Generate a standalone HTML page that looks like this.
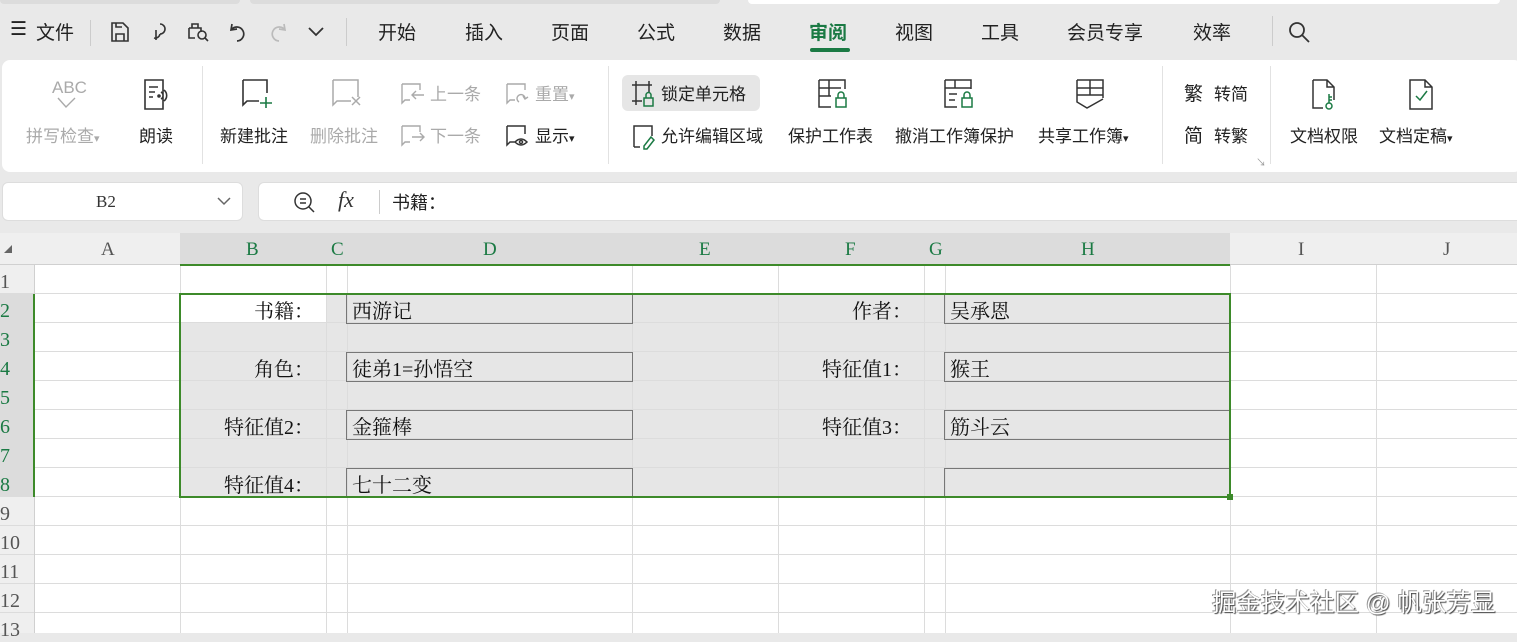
<!DOCTYPE html>
<html><head><meta charset="utf-8"><style>
*{margin:0;padding:0;box-sizing:border-box}
body{width:1517px;height:633px;overflow:hidden;background:#e9e9e9;font-family:"Liberation Sans","Noto Sans CJK SC",sans-serif;position:relative;color:#222}
.a{position:absolute;white-space:nowrap}
.m{font-size:19px;top:18px;color:#222}
.r{font-size:17px;color:#222;margin-top:-3px}
.g{color:#aaa}
.cell{font-family:"Liberation Serif","Noto Serif CJK SC",serif;font-size:20px;color:#111;margin-top:-2px}
.hd{font-family:"Liberation Serif","Noto Serif CJK SC",serif;font-size:19px;top:239px;color:#555}
.rn{font-family:"Liberation Serif","Noto Serif CJK SC",serif;font-size:20px;left:0;width:20px;text-align:left;color:#555;margin-top:1px}
.vl{position:absolute;width:1px;background:#dcdcdc;top:265px;height:368px}
.bx{position:absolute;border:1px solid #777;height:30px}
svg{position:absolute}
</style></head><body>
<div class="a" style="left:0;top:0;width:240px;height:4px;background:#dcdcdc;border-radius:0 0 6px 6px"></div>
<div class="a" style="left:250px;top:0;width:470px;height:4px;background:#dcdcdc;border-radius:0 0 6px 6px"></div>
<div class="a" style="left:748px;top:0;width:752px;height:4px;background:#fff;border-radius:0 0 6px 6px"></div>

<div class="a m" style="left:10px;">☰</div>
<div class="a m" style="left:36px;">文件</div>
<div class="a" style="left:90px;top:20px;width:1px;height:26px;background:#ccc"></div>
<svg style="left:108px;top:20px" width="24" height="24" fill="none" stroke="#333" stroke-width="1.6"><path d="M4 3h11l5 5v13H4z M8 21v-7h8v7 M8 3v4h6"/></svg>
<svg style="left:148px;top:20px" width="24" height="24" fill="none" stroke="#333" stroke-width="1.6"><path d="M12 4a5 5 0 0 1 0 10 M12 14a5 5 0 0 1-6 4 M8 10v10"/></svg>
<svg style="left:186px;top:20px" width="26" height="24" fill="none" stroke="#333" stroke-width="1.6"><path d="M3 8h12v4 M3 8v10h6 M6 8V4h6v4"/><circle cx="16" cy="15" r="4"/><path d="M19 18l3 3"/></svg>
<svg style="left:226px;top:20px" width="24" height="24" fill="none" stroke="#333" stroke-width="1.7"><path d="M6 4l-1 6 6-1 M5 10a7 7 0 1 1 6 11"/></svg>
<svg style="left:266px;top:20px" width="24" height="24" fill="none" stroke="#bbb" stroke-width="1.7"><path d="M18 4l1 6-6-1 M19 10a7 7 0 1 0-6 11"/></svg>
<svg style="left:306px;top:24px" width="20" height="16" fill="none" stroke="#333" stroke-width="1.8"><path d="M3 4l7 7 7-7"/></svg>
<div class="a" style="left:346px;top:18px;width:1px;height:28px;background:#ccc"></div>
<div class="a m" style="left:378px">开始</div>
<div class="a m" style="left:465px">插入</div>
<div class="a m" style="left:551px">页面</div>
<div class="a m" style="left:637px">公式</div>
<div class="a m" style="left:723px">数据</div>
<div class="a m" style="left:809px;color:#1b7a44;font-weight:bold">审阅</div>
<div class="a" style="left:810px;top:48px;width:40px;height:4px;background:#1b7a44;border-radius:2px"></div>
<div class="a m" style="left:895px">视图</div>
<div class="a m" style="left:981px">工具</div>
<div class="a m" style="left:1067px">会员专享</div>
<div class="a m" style="left:1193px">效率</div>
<div class="a" style="left:1272px;top:16px;width:1px;height:30px;background:#ccc"></div>
<svg style="left:1286px;top:19px" width="28" height="28" fill="none" stroke="#333" stroke-width="1.8"><circle cx="11" cy="11" r="7"/><path d="M16 16l7 7"/></svg>

<div class="a" style="left:2px;top:60px;width:1520px;height:112px;background:#fff;border-radius:8px"></div>
<div class="a" style="left:52px;top:78px;font-size:17px;color:#aaa">ABC</div>
<svg style="left:56px;top:96px" width="24" height="14" fill="none" stroke="#aaa" stroke-width="1.4"><path d="M2 2l8 9 9-9"/></svg>
<div class="a r g" style="left:26px;top:125px">拼写检查<span style="font-size:11px">▾</span></div>
<svg style="left:142px;top:78px" width="30" height="34" fill="none" stroke="#333" stroke-width="1.6"><path d="M3 2h18v29H3z M7 9h9 M7 14h6 M7 19h4 M19 14a4 4 0 0 1 0 7 M22 12a7 7 0 0 1 0 11"/><circle cx="17" cy="18" r="1" fill="#333"/></svg>
<div class="a r" style="left:139px;top:125px">朗读</div>
<div class="a" style="left:202px;top:66px;width:1px;height:98px;background:#e2e2e2"></div>
<svg style="left:240px;top:78px" width="36" height="32" fill="none" stroke="#333" stroke-width="1.6"><path d="M3 2h24v13 M3 2v25l4-4h12"/><path d="M26 19v11 M20 25h12" stroke="#1b7a44"/></svg>
<div class="a r" style="left:220px;top:125px">新建批注</div>
<svg style="left:330px;top:78px" width="36" height="32" fill="none" stroke="#aaa" stroke-width="1.5"><path d="M3 2h25v17 M3 2v25l4-4h14 M22 19l8 8 M30 19l-8 8"/></svg>
<div class="a r g" style="left:310px;top:125px">删除批注</div>
<svg style="left:400px;top:82px" width="26" height="24" fill="none" stroke="#aaa" stroke-width="1.4"><path d="M2 2h18v6 M2 2v19l3-3h5 M12 13h12 M16 9l-4 4 4 4"/></svg>
<div class="a r g" style="left:430px;top:83px">上一条</div>
<svg style="left:400px;top:124px" width="26" height="24" fill="none" stroke="#aaa" stroke-width="1.4"><path d="M2 2h18v6 M2 2v19l3-3h5 M12 13h12 M20 9l4 4-4 4"/></svg>
<div class="a r g" style="left:430px;top:125px">下一条</div>
<svg style="left:505px;top:82px" width="26" height="24" fill="none" stroke="#aaa" stroke-width="1.4"><path d="M2 2h18v6 M2 2v19l3-3h5 M14 20a4 4 0 1 1 6-3 M18 14l2 3 3-2"/></svg>
<div class="a r g" style="left:535px;top:83px">重置<span style="font-size:11px">▾</span></div>
<svg style="left:505px;top:124px" width="26" height="24" fill="none" stroke="#333" stroke-width="1.5"><path d="M2 2h18v8 M2 2v19l3-3h5 M10 18q6-6 12 0q-6 6-12 0"/><circle cx="16" cy="18" r="1.5"/></svg>
<div class="a r" style="left:535px;top:125px">显示<span style="font-size:11px">▾</span></div>
<div class="a" style="left:608px;top:66px;width:1px;height:98px;background:#e2e2e2"></div>
<div class="a" style="left:622px;top:75px;width:138px;height:36px;background:#e6e6e6;border-radius:6px"></div>
<svg style="left:631px;top:80px" width="26" height="28" fill="none" stroke="#333" stroke-width="1.5"><path d="M5 1v24 M1 5h20 M18 1v12 M1 21h10"/><rect x="13" y="18" width="9" height="8" stroke="#1b7a44"/><path d="M15 18v-3a2.5 2.5 0 0 1 5 0v3" stroke="#1b7a44"/></svg>
<div class="a r" style="left:661px;top:83px">锁定单元格</div>
<svg style="left:631px;top:123px" width="26" height="28" fill="none" stroke="#333" stroke-width="1.5"><path d="M3 24V3h18v10 M3 24h6"/><path d="M20 14l3 3-7 9h-3v-3z" stroke="#1b7a44"/></svg>
<div class="a r" style="left:661px;top:125px">允许编辑区域</div>
<svg style="left:816px;top:78px" width="34" height="32" fill="none" stroke="#333" stroke-width="1.5"><path d="M3 2h26v9 M3 2v27h12 M3 10h22 M13 2v16 M3 18h12"/><rect x="20" y="20" width="10" height="9" stroke="#1b7a44"/><path d="M22 20v-3a3 3 0 0 1 6 0v3" stroke="#1b7a44"/></svg>
<div class="a r" style="left:788px;top:125px">保护工作表</div>
<svg style="left:942px;top:78px" width="34" height="32" fill="none" stroke="#333" stroke-width="1.5"><path d="M3 2h26v9 M3 2v27h12 M3 10h26 M13 2v8 M7 16h8 M7 22h6"/><rect x="20" y="20" width="10" height="9" stroke="#1b7a44"/><path d="M22 20v-3a3 3 0 0 1 6 0v3" stroke="#1b7a44"/></svg>
<div class="a r" style="left:895px;top:125px">撤消工作簿保护</div>
<svg style="left:1074px;top:78px" width="34" height="32" fill="none" stroke="#333" stroke-width="1.5"><path d="M3 2h26v18 M3 2v22l10 6 16-9 M3 10h26 M3 17h26 M16 2v15"/></svg>
<div class="a r" style="left:1038px;top:125px">共享工作簿<span style="font-size:11px">▾</span></div>
<div class="a" style="left:1162px;top:66px;width:1px;height:98px;background:#e2e2e2"></div>
<div class="a r" style="left:1184px;top:82px;font-size:19px">繁</div>
<div class="a r" style="left:1214px;top:83px">转简</div>
<div class="a r" style="left:1184px;top:124px;font-size:19px">简</div>
<div class="a r" style="left:1214px;top:125px">转繁</div>
<div class="a" style="left:1256px;top:154px;font-size:10px;color:#999">↘</div>
<div class="a" style="left:1270px;top:66px;width:1px;height:98px;background:#e2e2e2"></div>
<svg style="left:1310px;top:78px" width="30" height="34" fill="none" stroke="#333" stroke-width="1.5"><path d="M3 2h14l7 7v13 M3 2v28h10 M17 2v7h7"/><circle cx="19" cy="28" r="3" stroke="#1b7a44"/><path d="M19 25V16 M19 19h3 M19 22h3" stroke="#1b7a44"/></svg>
<div class="a r" style="left:1290px;top:125px">文档权限</div>
<svg style="left:1407px;top:78px" width="30" height="34" fill="none" stroke="#333" stroke-width="1.5"><path d="M3 2h15l7 7v22H3z M18 2v7h7"/><path d="M9 18l4 4 7-9" stroke="#1b7a44"/></svg>
<div class="a r" style="left:1379px;top:125px">文档定稿<span style="font-size:11px">▾</span></div>

<div class="a" style="left:2px;top:182px;width:241px;height:39px;background:#fff;border-radius:6px;border:1px solid #ddd"></div>
<div class="a" style="left:96px;top:192px;font-family:'Liberation Serif',serif;font-size:17px;color:#333">B2</div>
<svg style="left:216px;top:194px" width="16" height="14" fill="none" stroke="#666" stroke-width="1.5"><path d="M2 4l6 6 6-6"/></svg>
<div class="a" style="left:258px;top:182px;width:1270px;height:39px;background:#fff;border-radius:6px;border:1px solid #ddd"></div>
<svg style="left:292px;top:190px" width="26" height="26" fill="none" stroke="#333" stroke-width="1.5"><circle cx="11" cy="11" r="8"/><path d="M17 17l5 5 M8 9h6 M8 13h6"/></svg>
<div class="a" style="left:338px;top:187px;font-family:'Liberation Serif',serif;font-style:italic;font-size:22px;color:#333">fx</div>
<div class="a" style="left:379px;top:190px;width:1px;height:24px;background:#ccc"></div>
<div class="a" style="left:392px;top:189px;font-size:18px;color:#222">书籍：</div>

<div class="a" style="left:0;top:233px;width:1517px;height:400px;background:#fff"></div>
<div class="a" style="left:0;top:233px;width:1517px;height:32px;background:#efefef"></div>
<div class="a" style="left:0;top:265px;width:34px;height:368px;background:#efefef"></div>
<div class="a" style="left:180px;top:233px;width:1050px;height:32px;background:#dcdcdc"></div>
<div class="a" style="left:0;top:294px;width:34px;height:203px;background:#dcdcdc"></div>
<div class="a" style="left:180px;top:294px;width:1050px;height:203px;background:#e6e6e6"></div>
<div class="a" style="left:180px;top:294px;width:146px;height:29px;background:#fff"></div>
<div class="a" style="left:34px;top:265px;width:1483px;height:368px;background:repeating-linear-gradient(to bottom,transparent 0,transparent 28px,#dcdcdc 28px,#dcdcdc 29px)"></div>
<div class="a" style="left:0;top:265px;width:34px;height:368px;background:repeating-linear-gradient(to bottom,transparent 0,transparent 28px,#dcdcdc 28px,#dcdcdc 29px)"></div>
<div class="vl" style="left:180px"></div><div class="vl" style="left:326px"></div><div class="vl" style="left:347px"></div><div class="vl" style="left:632px"></div><div class="vl" style="left:778px"></div><div class="vl" style="left:924px"></div><div class="vl" style="left:945px"></div><div class="vl" style="left:1230px"></div><div class="vl" style="left:1376px"></div>
<div class="a" style="left:34px;top:265px;width:1px;height:368px;background:#d0d0d0"></div>
<div class="a" style="left:0;top:264px;width:1517px;height:1px;background:#d0d0d0"></div>
<div class="a" style="left:180px;top:264px;width:1050px;height:2px;background:#3d8a2a"></div>
<div class="a" style="left:33px;top:294px;width:2px;height:203px;background:#3d8a2a"></div>
<div class="a" style="left:4px;top:245px;width:0;height:0;border-left:8px solid transparent;border-bottom:8px solid #666"></div>

<div class="a hd" style="left:101px">A</div>
<div class="a hd" style="left:246px;color:#1b7a44">B</div>
<div class="a hd" style="left:331px;color:#1b7a44">C</div>
<div class="a hd" style="left:483px;color:#1b7a44">D</div>
<div class="a hd" style="left:699px;color:#1b7a44">E</div>
<div class="a hd" style="left:845px;color:#1b7a44">F</div>
<div class="a hd" style="left:929px;color:#1b7a44">G</div>
<div class="a hd" style="left:1081px;color:#1b7a44">H</div>
<div class="a hd" style="left:1298px">I</div>
<div class="a hd" style="left:1443px">J</div>

<div class="a rn" style="top:270px">1</div>
<div class="a rn" style="top:299px;color:#1b7a44">2</div>
<div class="a rn" style="top:328px;color:#1b7a44">3</div>
<div class="a rn" style="top:357px;color:#1b7a44">4</div>
<div class="a rn" style="top:386px;color:#1b7a44">5</div>
<div class="a rn" style="top:415px;color:#1b7a44">6</div>
<div class="a rn" style="top:444px;color:#1b7a44">7</div>
<div class="a rn" style="top:473px;color:#1b7a44">8</div>
<div class="a rn" style="top:502px">9</div>
<div class="a rn" style="top:531px">10</div>
<div class="a rn" style="top:560px">11</div>
<div class="a rn" style="top:589px">12</div>
<div class="a rn" style="top:618px">13</div>

<div class="bx" style="left:346px;top:294px;width:287px"></div>
<div class="bx" style="left:346px;top:352px;width:287px"></div>
<div class="bx" style="left:346px;top:410px;width:287px"></div>
<div class="bx" style="left:346px;top:468px;width:287px"></div>
<div class="bx" style="left:944px;top:294px;width:287px"></div>
<div class="bx" style="left:944px;top:352px;width:287px"></div>
<div class="bx" style="left:944px;top:410px;width:287px"></div>
<div class="bx" style="left:944px;top:468px;width:287px"></div>

<div class="a cell" style="right:1203px;top:297px">书籍：</div>
<div class="a cell" style="right:1203px;top:355px">角色：</div>
<div class="a cell" style="right:1203px;top:413px">特征值2：</div>
<div class="a cell" style="right:1203px;top:471px">特征值4：</div>
<div class="a cell" style="left:352px;top:297px">西游记</div>
<div class="a cell" style="left:352px;top:355px">徒弟1=孙悟空</div>
<div class="a cell" style="left:352px;top:413px">金箍棒</div>
<div class="a cell" style="left:352px;top:471px">七十二变</div>
<div class="a cell" style="right:605px;top:297px">作者：</div>
<div class="a cell" style="right:605px;top:355px">特征值1：</div>
<div class="a cell" style="right:605px;top:413px">特征值3：</div>
<div class="a cell" style="left:950px;top:297px">吴承恩</div>
<div class="a cell" style="left:950px;top:355px">猴王</div>
<div class="a cell" style="left:950px;top:413px">筋斗云</div>

<div class="a" style="left:179px;top:293px;width:1052px;height:205px;border:2px solid #3d8a2a"></div>
<div class="a" style="left:1227px;top:494px;width:6px;height:6px;background:#3d8a2a"></div>

<div class="a" style="left:1212px;top:584px;font-size:24.5px;color:#fff;text-shadow:1px 1px 1px #444,-1px -1px 0 #999">掘金技术社区 @ 帆张芳显</div>
</body></html>
